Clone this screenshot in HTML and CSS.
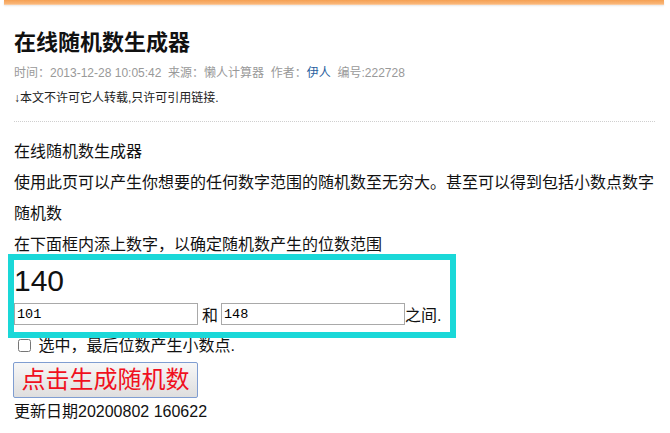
FILE: index.html
```html
<!DOCTYPE html>
<html lang="zh-CN">
<head>
<meta charset="UTF-8">
<title>在线随机数生成器</title>
<link rel="stylesheet" href="styles.css">
</head>
<body>
<div class="topbar"></div>
<div class="article">
  <h1>在线随机数生成器</h1>
  <div class="meta">时间：2013-12-28 10:05:42 &nbsp;来源：懒人计算器 &nbsp;作者：<a href="#">伊人</a> &nbsp;编号:222728</div>
  <div class="notice">↓本文不许可它人转载,只许可引用链接.</div>

  <div class="content">
    <div class="line">在线随机数生成器</div>
    <div class="line">使用此页可以产生你想要的任何数字范围的随机数至无穷大。甚至可以得到包括小数点数字随机数</div>
    <div class="line">在下面框内添上数字，以确定随机数产生的位数范围</div>

    <div class="rangebox">
      <div class="result" id="result">140</div>
      <div class="range">
        <input type="text" id="min" value="101">
        <span class="and">和</span>
        <input type="text" id="max" value="148">
        <span>之间.</span>
      </div>
    </div>

    <label class="decimal"><input type="checkbox" id="dec"> 选中，最后位数产生小数点.</label>
    <button class="go" id="go">点击生成随机数</button>
    <div class="updated">更新日期20200802 160622</div>
  </div>
</div>

<script>
  document.getElementById('go').addEventListener('click', function() {
    const min = parseFloat(document.getElementById('min').value) || 0;
    const max = parseFloat(document.getElementById('max').value) || 0;
    let n = min + Math.random() * (max - min);
    if (document.getElementById('dec').checked) {
      n = n.toFixed(1);
    } else {
      n = Math.round(n);
    }
    document.getElementById('result').textContent = n;
  });
</script>
</body>
</html>
```

FILE: styles.css
```css
body {
  margin: 0;
  background: #fff;
  color: #111;
  font-family: "Liberation Sans", "Noto Sans CJK SC", sans-serif;
}

.topbar {
  height: 5px;
  margin: 0 6px 0 4px;
  background: linear-gradient(to bottom, #f5a053, #f9b475 70%, #fcd3ad);
  box-shadow: 0 1px 2px #e8e8e8;
}

.article {
  padding: 0 15px 0 14px;
}

h1 {
  margin: 23px 0 0;
  font-size: 22px;
  line-height: 30px;
  font-weight: bold;
  color: #111;
}

.meta {
  margin-top: 5px;
  font-size: 12px;
  line-height: 20px;
  color: #999;
}

.meta a {
  color: #2a5f9e;
  text-decoration: none;
}

.notice {
  margin-top: 5px;
  padding-bottom: 13px;
  font-size: 12px;
  line-height: 20px;
  color: #222;
  border-bottom: 1px dotted #cfcfcf;
}

.content {
  padding-top: 14px;
  font-size: 16px;
}

.line {
  line-height: 31px;
}

.rangebox {
  width: 436px;
  outline: 6px solid #1ad8d8;
  padding-bottom: 7px;
}

.result {
  font-size: 30px;
  line-height: 40px;
  padding-top: 1px;
}

.range {
  display: flex;
  align-items: center;
  margin-top: 2px;
  height: 22px;
}

.range input {
  box-sizing: border-box;
  width: 184px;
  height: 22px;
  padding: 1px 2px;
  border: 1px solid #a9a9a9;
  font-family: "Liberation Mono", monospace;
  font-size: 13.5px;
}

.and {
  margin: 0 3px 0 4px;
}

.decimal {
  display: block;
  line-height: 28px;
}

.decimal input {
  margin: 0 3px 0 4px;
  width: 13px;
  height: 13px;
  vertical-align: -1px;
}

.go {
  display: block;
  margin: 2px 0 0 -1px;
  width: 185px;
  height: 36px;
  padding: 0;
  border: 1px solid #7f9dd1;
  border-radius: 2px;
  background: linear-gradient(to bottom, #f7f7f7, #dedede);
  color: #f01020;
  font-family: "Liberation Sans", "Noto Sans CJK SC", sans-serif;
  font-size: 24px;
  line-height: 34px;
}

.updated {
  margin-top: 4px;
  line-height: 20px;
}
```
